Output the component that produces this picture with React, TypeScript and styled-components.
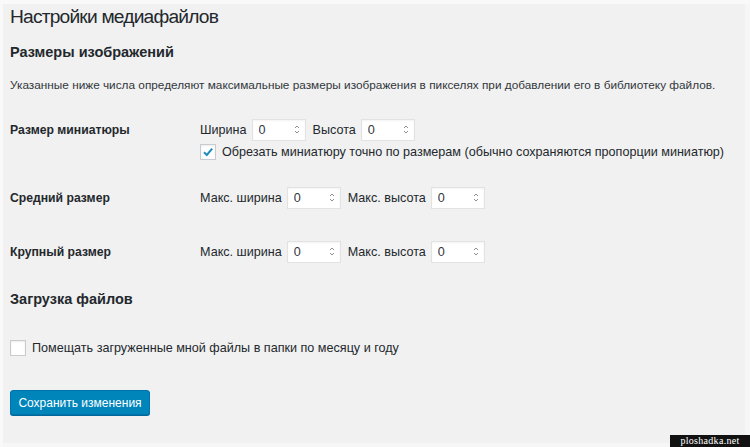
import React from 'react';
import styled, { createGlobalStyle } from 'styled-components';

const GlobalStyle = createGlobalStyle`
    html, body {
        margin: 0;
        padding: 0;
        background: #f1f1f1;
    }
    body {
        font-family: "Liberation Sans", Arial, sans-serif;
        color: #23282d;
        font-size: 12.6px;
    }
`;

const Frame = styled.div`
    position: relative;
    width: 750px;
    height: 447px;
    box-sizing: border-box;
    padding: 0 0 0 10px;
    overflow: hidden;
    white-space: nowrap;
    background: #f1f1f1;
    box-shadow:
        inset 3px 4px 0 #f9f9f9,
        inset -5px -4px 0 #f6f6f6;
`;

const Title = styled.h1`
    margin: 0;
    padding-top: 2px;
    font-size: 19.2px;
    letter-spacing: -0.8px;
    line-height: 29px;
    font-weight: 400;
`;

const SectionTitle = styled.h2<{ $top: number }>`
    margin: ${(p) => p.$top}px 0 0;
    font-size: 14.5px;
    line-height: 22px;
    font-weight: 700;
`;

const Description = styled.p`
    margin: 13px 0 0;
    font-size: 11.8px;
    line-height: 18px;
    color: #32373c;
`;

const FormTable = styled.div`
    margin-top: 8.5px;
`;

const Row = styled.div<{ $padBottom?: number }>`
    display: grid;
    grid-template-columns: 190px 1fr;
    padding: 16px 0 ${(p) => p.$padBottom ?? 16}px;
`;

const RowLabel = styled.div`
    font-weight: 700;
    font-size: 12.2px;
    line-height: 22px;
`;

const Fields = styled.div`
    display: flex;
    flex-direction: column;
`;

const InputLine = styled.div`
    display: flex;
    align-items: center;
    height: 22px;
`;

const FieldLabel = styled.label`
    margin-right: 5px;
    & ~ & {
        margin-left: 7px;
    }
`;

const NumberBox = styled.span`
    display: inline-flex;
    align-items: center;
    width: 54px;
    height: 22px;
    box-sizing: border-box;
    background: #fff;
    border: 1px solid #e2e2e2;
    box-shadow: inset 0 1px 2px rgba(0, 0, 0, 0.05);
`;

const NumberInput = styled.input`
    flex: 1;
    min-width: 0;
    border: none;
    background: transparent;
    font: inherit;
    color: #32373c;
    padding: 0 0 0 6px;
    outline: none;
`;

const Spin = styled.svg`
    margin-right: 5px;
    flex: none;
`;

const CheckLine = styled.label<{ $top: number }>`
    display: flex;
    align-items: center;
    gap: 6px;
    margin-top: ${(p) => p.$top}px;
    line-height: 16px;
`;

const Box = styled.span`
    width: 16px;
    height: 16px;
    box-sizing: border-box;
    border: 1px solid #c8ccd0;
    background: #fff;
    box-shadow: inset 0 1px 2px rgba(0, 0, 0, 0.08);
    display: inline-flex;
    align-items: center;
    justify-content: center;
    flex: none;
`;

const SaveButton = styled.button`
    display: block;
    margin-top: 34px;
    width: 140px;
    height: 25px;
    padding: 0;
    border: 1px solid #0073aa;
    border-radius: 3px;
    background: #0085ba;
    box-shadow: 0 1px 0 #006799;
    color: #fff;
    font: inherit;
    font-size: 12px;
    text-align: center;
    white-space: nowrap;
`;

const Watermark = styled.div`
    position: absolute;
    right: 0;
    bottom: 0;
    width: 80px;
    height: 12px;
    background: #111;
    color: #fff;
    font-family: "Liberation Serif", serif;
    font-size: 10px;
    line-height: 12px;
    text-align: center;
    letter-spacing: 0.3px;
`;

const Spinner = () => (
    <Spin width="6" height="11" viewBox="0 0 6 11">
        <path d="M1 4 L3 2 L5 4" fill="none" stroke="#8c8f94" strokeWidth="1" />
        <path d="M1 7 L3 9 L5 7" fill="none" stroke="#8c8f94" strokeWidth="1" />
    </Spin>
);

const NumberField = ({ value }: { value: number }) => (
    <NumberBox>
        <NumberInput type="text" defaultValue={String(value)} />
        <Spinner />
    </NumberBox>
);

const Checkbox = ({ checked }: { checked?: boolean }) => (
    <Box>
        {checked && (
            <svg width="12" height="12" viewBox="0 0 12 12">
                <path
                    d="M2 6.2 L4.8 9 L10.2 2.6"
                    fill="none"
                    stroke="#1e8cbe"
                    strokeWidth="2"
                />
            </svg>
        )}
    </Box>
);

const SizeRow = ({
    label,
    w,
    h,
    padBottom,
    children,
}: {
    label: string;
    w: string;
    h: string;
    padBottom?: number;
    children?: React.ReactNode;
}) => (
    <Row $padBottom={padBottom}>
        <RowLabel>{label}</RowLabel>
        <Fields>
            <InputLine>
                <FieldLabel>{w}</FieldLabel>
                <NumberField value={0} />
                <FieldLabel>{h}</FieldLabel>
                <NumberField value={0} />
            </InputLine>
            {children}
        </Fields>
    </Row>
);

const App = (): JSX.Element => (
    <>
        <GlobalStyle />
        <Frame>
            <Title>Настройки медиафайлов</Title>
            <SectionTitle $top={10}>Размеры изображений</SectionTitle>
            <Description>
                Указанные ниже числа определяют максимальные размеры изображения в
                пикселях при добавлении его в библиотеку файлов.
            </Description>

            <FormTable>
                <SizeRow label="Размер миниатюры" w="Ширина" h="Высота" padBottom={11}>
                    <CheckLine $top={3}>
                        <Checkbox checked />
                        Обрезать миниатюру точно по размерам (обычно сохраняются
                        пропорции миниатюр)
                    </CheckLine>
                </SizeRow>
                <SizeRow label="Средний размер" w="Макс. ширина" h="Макс. высота" />
                <SizeRow label="Крупный размер" w="Макс. ширина" h="Макс. высота" />
            </FormTable>

            <SectionTitle $top={9.5}>Загрузка файлов</SectionTitle>
            <CheckLine $top={30}>
                <Checkbox />
                Помещать загруженные мной файлы в папки по месяцу и году
            </CheckLine>

            <SaveButton type="button">Сохранить изменения</SaveButton>

            <Watermark>ploshadka.net</Watermark>
        </Frame>
    </>
);

export default App;
